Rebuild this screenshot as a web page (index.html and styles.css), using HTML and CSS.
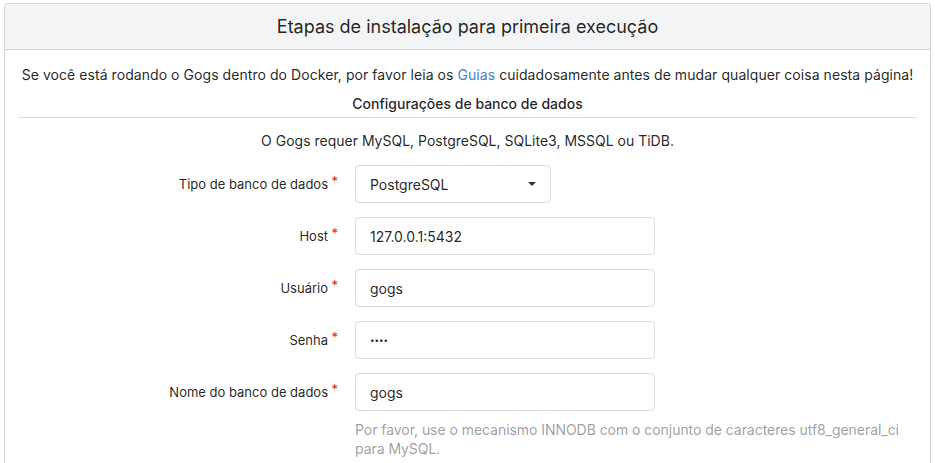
FILE: index.html
```html
<!DOCTYPE html>
<html lang="pt">
<head>
<meta charset="utf-8">
<link rel="stylesheet" href="styles.css">
</head>
<body>
<div class="card">
  <h3 class="card-header">Etapas de instalação para primeira execução</h3>
  <div class="card-body">
    <p class="notice">Se você está rodando o Gogs dentro do Docker, por favor leia os <a href="#">Guias</a> cuidadosamente antes de mudar qualquer coisa nesta página!</p>
    <h4 class="section-title">Configurações de banco de dados</h4>
    <p class="section-desc">O Gogs requer MySQL, PostgreSQL, SQLite3, MSSQL ou TiDB.</p>
    <div class="form">
      <div class="field">
        <label class="label">Tipo de banco de dados</label>
        <div class="select">
          <span>PostgreSQL</span>
          <span class="caret"></span>
        </div>
      </div>
      <div class="field">
        <label class="label">Host</label>
        <div class="input">127.0.0.1:5432</div>
      </div>
      <div class="field">
        <label class="label">Usuário</label>
        <div class="input">gogs</div>
      </div>
      <div class="field">
        <label class="label">Senha</label>
        <div class="input password">••••</div>
      </div>
      <div class="field">
        <label class="label">Nome do banco de dados</label>
        <div class="input">gogs</div>
      </div>
      <div class="help">Por favor, use o mecanismo INNODB com o conjunto de caracteres utf8_general_ci para MySQL.</div>
    </div>
  </div>
</div>
</body>
</html>
```
FILE: styles.css
```css
* { box-sizing: border-box; }
html, body { margin: 0; padding: 0; background: #fff; }
body {
  font-family: Inter, "Liberation Sans", sans-serif;
  color: rgba(0,0,0,0.87);
  font-size: 14px;
  padding: 3px 4px 0 4px;
}
.card {
  border: 1px solid #d4d4d5;
  border-bottom: none;
  border-radius: 4px 4px 0 0;
  height: 470px;
}
.card-header {
  margin: 0;
  background: #f3f4f5;
  border-bottom: 1px solid #d4d4d5;
  border-radius: 4px 4px 0 0;
  height: 46px;
  display: flex;
  align-items: center;
  justify-content: center;
  font-size: 18px;
  font-weight: 400;
}
.card-body { padding: 0 13px; }
.notice {
  margin: 0;
  text-align: center;
  padding-top: 15px;
  line-height: 20px;
  letter-spacing: 0.06px;
}
.notice a { color: #4183c4; text-decoration: none; }
.section-title {
  margin: 9px 0 0 0;
  text-align: center;
  font-size: 14px;
  font-weight: 500;
  line-height: 20px;
  padding-bottom: 3px;
  border-bottom: 1px solid #dedede;
}
.section-desc {
  margin: 0;
  text-align: center;
  padding-top: 13px;
  line-height: 20px;
}
.form { padding-top: 14px; }
.field {
  display: flex;
  align-items: center;
  margin-bottom: 14px;
  height: 38px;
}
.label {
  width: 320px;
  text-align: right;
  padding-right: 10px;
  font-size: 13px;
  position: relative;
}
.label::after {
  content: "*";
  color: #db2828;
  position: absolute;
  right: 0;
  top: -3px;
}
.select, .input {
  margin-left: 17px;
  height: 38px;
  border: 1px solid rgba(34,36,38,0.15);
  border-radius: 4px;
  display: flex;
  align-items: center;
  padding: 0 14px;
}
.select {
  width: 196px;
  justify-content: space-between;
}
.input { width: 300px; }
.password { font-size: 8px; letter-spacing: 0; }
.caret {
  width: 0; height: 0;
  border-left: 4px solid transparent;
  border-right: 4px solid transparent;
  border-top: 4px solid rgba(0,0,0,0.8);
}
.help {
  margin-left: 337px;
  margin-top: -5px;
  color: rgba(0,0,0,0.4);
  width: 560px;
  line-height: 19px;
  letter-spacing: -0.05px;
}
```
